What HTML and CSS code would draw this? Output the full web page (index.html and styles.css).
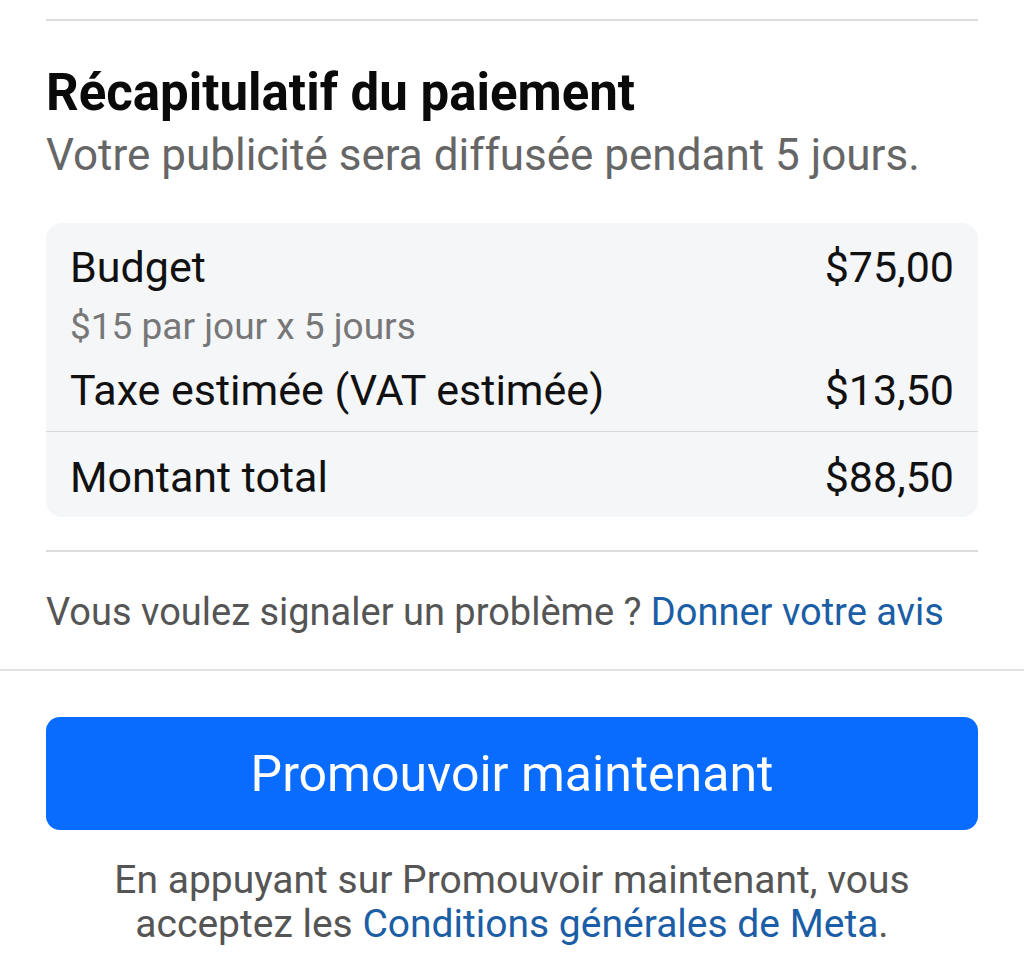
FILE: index.html
```html
<!DOCTYPE html>
<html>
<head>
  <title>Récapitulatif du paiement</title>
  <meta charset="UTF-8" />
  <link rel="stylesheet" href="styles.css">
</head>
<body>
  <div class="page">
    <hr class="rule">

    <section class="summary">
      <h1>Récapitulatif du paiement</h1>
      <p class="lead">Votre publicité sera diffusée pendant 5 jours.</p>

      <div class="card">
        <div class="lines">
          <div class="row">
            <span>Budget</span>
            <span>$75,00</span>
          </div>
          <div class="hint">$15 par jour x 5 jours</div>
          <div class="row">
            <span>Taxe estimée (VAT estimée)</span>
            <span>$13,50</span>
          </div>
        </div>
        <div class="row total">
          <span>Montant total</span>
          <span>$88,50</span>
        </div>
      </div>
    </section>

    <hr class="rule">

    <p class="feedback">Vous voulez signaler un problème ? <a href="#">Donner votre avis</a></p>
  </div>

  <div class="footer">
    <button type="button" class="promote">Promouvoir maintenant</button>
    <p class="terms">En appuyant sur Promouvoir maintenant, vous<br>acceptez les <a href="#">Conditions générales de Meta</a>.</p>
  </div>
</body>
</html>
```

FILE: styles.css
```css
body { margin: 0; background: #fff; font-family: Roboto, "Noto Sans", sans-serif; color: #111; }
.page { padding: 0 46px; }
.rule { border: 0; border-top: 2px solid #dcdcdc; margin: 0; }
.page > .rule:first-child { margin-top: 19px; }

.summary { padding-top: 42px; padding-bottom: 33px; }
h1 { font-size: 51px; font-weight: 700; margin: 0; line-height: 60px; color: #0a0a0a; }
.lead { font-size: 44px; color: #666; margin: 4px 0 0; line-height: 56px; }

.card { background: #f5f6f8; border-radius: 16px; margin-top: 40px; }
.lines { padding: 16px 24px 13px; border-bottom: 1px solid #d8d8dc; }
.row { display: flex; justify-content: space-between; font-size: 43px; line-height: 56px; }
.hint { font-size: 37px; color: #777; line-height: 48px; margin: 8px 0 11px; }
.total { padding: 17px 24px 12px; }

.feedback { font-size: 38px; line-height: 48px; color: #555; margin: 0; padding: 36px 0 33px; }
.feedback a, .terms a { color: #1b5ea6; text-decoration: none; }

.footer { border-top: 2px solid #e2e2e2; padding: 46px 46px 0; }
.promote { display: block; width: 100%; height: 113px; border: 0; border-radius: 14px; background: #0a6cff; color: #fff; font-family: inherit; font-size: 50px; }
.terms { text-align: center; font-size: 39px; line-height: 44px; color: #555; margin: 28px 0 0; }
```
